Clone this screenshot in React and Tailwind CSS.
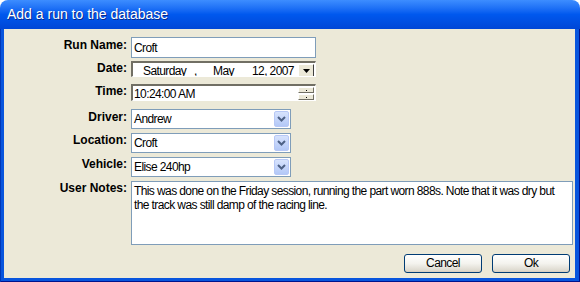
import React from 'react';

const field = "font-['Liberation_Sans',Arial,sans-serif] text-[12px] tracking-[-0.6px] text-black whitespace-nowrap";

function Label({ children }) {
  return (
    <div className="w-[124px] shrink-0 pr-[1px] text-right font-['Liberation_Sans',Arial,sans-serif] text-[12px] font-bold leading-[14px] text-black">
      {children}
    </div>
  );
}

function Combo({ value }) {
  return (
    <div className="flex h-[20px] w-[160px] items-center border border-[#7f9db9] bg-white pl-[2px] pr-[1px]">
      <span className={`${field} flex-1 leading-[16px]`}>{value}</span>
      <div className="flex h-[16px] w-[15px] items-center justify-center rounded-[2px] border border-[#b7c8f6] bg-gradient-to-b from-[#d7e3fd] to-[#b3c8f7]">
        <svg width="9" height="6" viewBox="0 0 9 6">
          <path d="M1 1 L4.5 4.5 L8 1" fill="none" stroke="#4d6185" strokeWidth="2" />
        </svg>
      </div>
    </div>
  );
}

function XPButton({ children }) {
  return (
    <button className="flex h-[19px] w-[78px] items-center justify-center rounded-[3px] border border-[#003c74] bg-gradient-to-b from-[#ffffff] via-[#f4f3ee] to-[#d8d4c8] shadow-[inset_0_-1px_0_#d6d0c5]">
      <span className={`${field} leading-[15px]`}>{children}</span>
    </button>
  );
}

export default function App() {
  return (
    <div className="h-[282px] w-[580px] bg-white">
      <div className="flex h-full flex-col overflow-hidden rounded-t-[8px]">
        <div className="flex h-[29px] shrink-0 items-center bg-gradient-to-b from-[#3d8dff] via-[#0058ee] to-[#0046d6] px-[7px] pb-[1px]">
          <span className="font-['Liberation_Sans',Arial,sans-serif] text-[14px] text-white [text-shadow:1px_1px_0_#0a2a8a]">
            Add a run to the database
          </span>
        </div>

        <div className="flex flex-1 bg-[#0855dd] pb-[4px] pl-[4px] pr-[5px] shadow-[inset_1px_0_0_#0037b8,inset_-1px_0_0_#00138c,inset_0_-1px_0_#00138c]">
          <div className="flex flex-1 flex-col bg-[#ece9d8]">
            <div className="mt-[8px] flex items-start gap-[3px]">
              <div className="pt-[1px]"><Label>Run Name:</Label></div>
              <div className="flex h-[21px] w-[185px] items-center border border-[#7f9db9] bg-white pl-[2px]">
                <span className={`${field} leading-[16px]`}>Croft</span>
              </div>
            </div>

            <div className="mt-[3px] flex items-start gap-[3px]">
              <Label>Date:</Label>
              <div className="flex h-[16px] w-[185px] overflow-hidden border-b border-l-2 border-r border-t-2 border-b-[#ffffff] border-l-[#716f64] border-r-[#ffffff] border-t-[#716f64] bg-white">
                <div className={`${field} flex h-[13px] flex-1 overflow-hidden pl-[10px] pt-[1px] leading-[14px]`}>
                  <span className="w-[51px] shrink-0">Saturday</span>
                  <span className="w-[19px] shrink-0">,</span>
                  <span className="w-[39px] shrink-0">May</span>
                  <span className="shrink-0">12, 2007</span>
                </div>
                <div className="mr-[1px] mt-[1px] flex h-[13px] w-[16px] shrink-0 items-center justify-center border border-b-[#404040] border-l-white border-r-[#404040] border-t-white bg-[#ece9d8]">
                  <svg width="7" height="4" viewBox="0 0 7 4"><path d="M0 0 H7 L3.5 4 Z" fill="#000" /></svg>
                </div>
              </div>
            </div>

            <div className="mt-[7px] flex items-start gap-[3px]">
              <Label>Time:</Label>
              <div className="flex h-[17px] w-[185px] border-b border-l-2 border-r border-t-2 border-b-[#ffffff] border-l-[#716f64] border-r-[#ffffff] border-t-[#716f64] bg-white">
                <span className={`${field} flex-1 pl-[1px] pt-[1px] leading-[14px]`}>10:24:00 AM</span>
                <div className="mr-[1px] flex w-[16px] shrink-0 flex-col justify-center gap-[1px] pt-[1px]">
                  <div className="flex h-[6px] items-center justify-center border border-b-[#716f64] border-l-white border-r-[#716f64] border-t-white bg-[#ece9d8]">
                    <div className="h-[1px] w-[1px] bg-black" />
                  </div>
                  <div className="flex h-[6px] items-center justify-center border border-b-[#716f64] border-l-white border-r-[#716f64] border-t-white bg-[#ece9d8]">
                    <div className="h-[1px] w-[1px] bg-black" />
                  </div>
                </div>
              </div>
            </div>

            <div className="mt-[8px] flex items-start gap-[3px]">
              <div className="pt-[1px]"><Label>Driver:</Label></div>
              <Combo value="Andrew" />
            </div>

            <div className="mt-[4px] flex items-start gap-[3px]">
              <Label>Location:</Label>
              <Combo value="Croft" />
            </div>

            <div className="mt-[4px] flex items-start gap-[3px]">
              <Label>Vehicle:</Label>
              <Combo value="Elise 240hp" />
            </div>

            <div className="mt-[4px] flex items-start gap-[3px]">
              <Label>User Notes:</Label>
              <div className="h-[64px] w-[442px] border border-[#7f9db9] bg-white px-[2px] pt-[2px]">
                <p className="font-['Liberation_Sans',Arial,sans-serif] text-[12px] leading-[14px] tracking-[-0.6px] text-black">
                  This was done on the Friday session, running the part worn 888s. Note that it was dry but the track was still damp of the racing line.
                </p>
              </div>
            </div>

            <div className="mt-[9px] flex justify-end gap-[10px] pr-[5px]">
              <XPButton>Cancel</XPButton>
              <XPButton>Ok</XPButton>
            </div>
          </div>
        </div>
      </div>
    </div>
  );
}
